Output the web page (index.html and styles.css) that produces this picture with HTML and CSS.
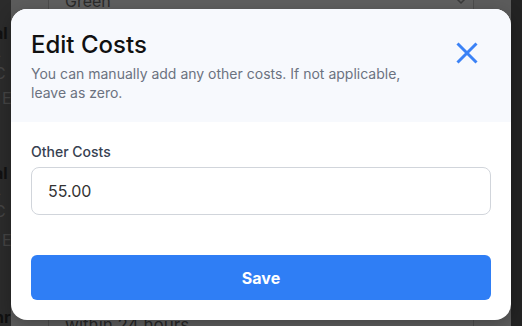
FILE: index.html
```html
<!DOCTYPE html>
<html lang="en">
<head>
  <meta charset="UTF-8">
  <title>Edit Costs</title>
  <meta name="viewport" content="width=device-width, initial-scale=1.0">
  <link rel="stylesheet" href="styles.css">
</head>
<body>

  <!-- page behind the dialog (dimmed) -->
  <div class="page">
    <div class="side">
      <span class="frag bold f1">al</span>
      <span class="frag f2">-C</span>
      <span class="frag f3">E</span>
      <span class="frag bold f4">al</span>
      <span class="frag f5">-C</span>
      <span class="frag f6">E</span>
      <span class="frag bold f7">nr</span>
    </div>
    <div class="main">
      <div class="content">
        <div class="fake-select">
          <span>Green</span>
          <svg width="12" height="8" viewBox="0 0 12 8"><path d="M1 1l5 5 5-5" fill="none" stroke="#3a3a3a" stroke-width="1.5"/></svg>
        </div>
        <div class="spacer"></div>
        <p class="note">within 24 hours.</p>
      </div>
    </div>
    <div class="edge"></div>
  </div>

  <!-- dialog -->
  <div class="modal">
    <div class="modal-header">
      <div class="heading">
        <h2>Edit Costs</h2>
        <p>You can manually add any other costs. If not applicable, leave as zero.</p>
      </div>
      <button class="close" aria-label="Close">
        <svg width="22" height="22" viewBox="0 0 22 22">
          <path d="M1.5 1.5l19 19M20.5 1.5l-19 19" stroke="#3b82f6" stroke-width="3" fill="none"/>
        </svg>
      </button>
    </div>
    <div class="modal-body">
      <label for="otherCosts">Other Costs</label>
      <input type="text" id="otherCosts" value="55.00">
      <button class="save">Save</button>
    </div>
  </div>

</body>
</html>
```

FILE: styles.css
```css
* {
  box-sizing: border-box;
}
body {
  margin: 0;
  font-family: Inter, "Noto Sans", sans-serif;
  background: #222;
  overflow: hidden;
}

.page {
  display: flex;
  height: 326px;
}
.side {
  width: 11px;
  background: #2b2b2b;
  position: relative;
  overflow: hidden;
}
.frag {
  position: absolute;
  left: -6px;
  font-size: 16px;
  line-height: 18px;
  color: #444;
}
.bold { font-weight: 700; color: #111; }
.f1 { top: 24px; }
.f2 { top: 46px; }
.f3 { top: 89px; left: 2px; }
.f4 { top: 164px; }
.f5 { top: 184px; }
.f6 { top: 231px; left: 2px; }
.f7 { top: 308px; }

.main {
  flex: 1;
  background: #5c5c5c;
  padding-left: 37px;
  padding-right: 37px;
}
.content {
  border-left: 1px solid #4c4c4c;
  border-right: 1px solid #4c4c4c;
  height: 100%;
  display: flex;
  flex-direction: column;
}
.fake-select {
  margin-top: -10px;
  height: 22px;
  border-bottom: 1px solid #555;
  display: flex;
  justify-content: space-between;
  align-items: center;
  padding: 0 6px 0 16px;
  font-size: 16px;
  color: #2a2a2a;
  background: #5f5f5f;
}
.spacer {
  flex: 1;
}
.note {
  margin: 0 0 -10px 16px;
  font-size: 17px;
  color: #262626;
  line-height: 22px;
}
.edge {
  width: 11px;
  background: #232323;
}

.modal {
  position: absolute;
  top: 9px;
  left: 11px;
  width: 500px;
  background: white;
  border-radius: 16px;
  overflow: hidden;
  box-shadow: 0 4px 16px rgba(0,0,0,0.25);
}
.modal-header {
  background: #f7f9fd;
  padding: 20px;
  display: flex;
  justify-content: space-between;
  align-items: flex-start;
}
.heading h2 {
  margin: 0;
  font-size: 24px;
  line-height: 32px;
  font-weight: 500;
  color: #111;
}
.heading p {
  margin: 3px 0 0;
  max-width: 390px;
  font-size: 14px;
  line-height: 19px;
  color: #6b7280;
}
.close {
  background: none;
  border: none;
  padding: 0;
  margin: 13px 13px 0 0;
  width: 22px;
  height: 22px;
  cursor: pointer;
}
.close svg {
  display: block;
}

.modal-body {
  padding: 20px 20px 20px;
  display: flex;
  flex-direction: column;
}
label {
  font-size: 14px;
  line-height: 20px;
  font-weight: 500;
  color: #374151;
  margin-bottom: 5px;
}
input[type="text"] {
  height: 48px;
  padding: 0 16px;
  border: 1px solid #d1d5db;
  border-radius: 8px;
  font-family: inherit;
  font-size: 16px;
  color: #333;
  outline: none;
}
.save {
  margin-top: 40px;
  height: 45px;
  background: #2f7ef5;
  color: white;
  border: none;
  border-radius: 6px;
  font-family: inherit;
  font-size: 16px;
  font-weight: 700;
  cursor: pointer;
}
```
